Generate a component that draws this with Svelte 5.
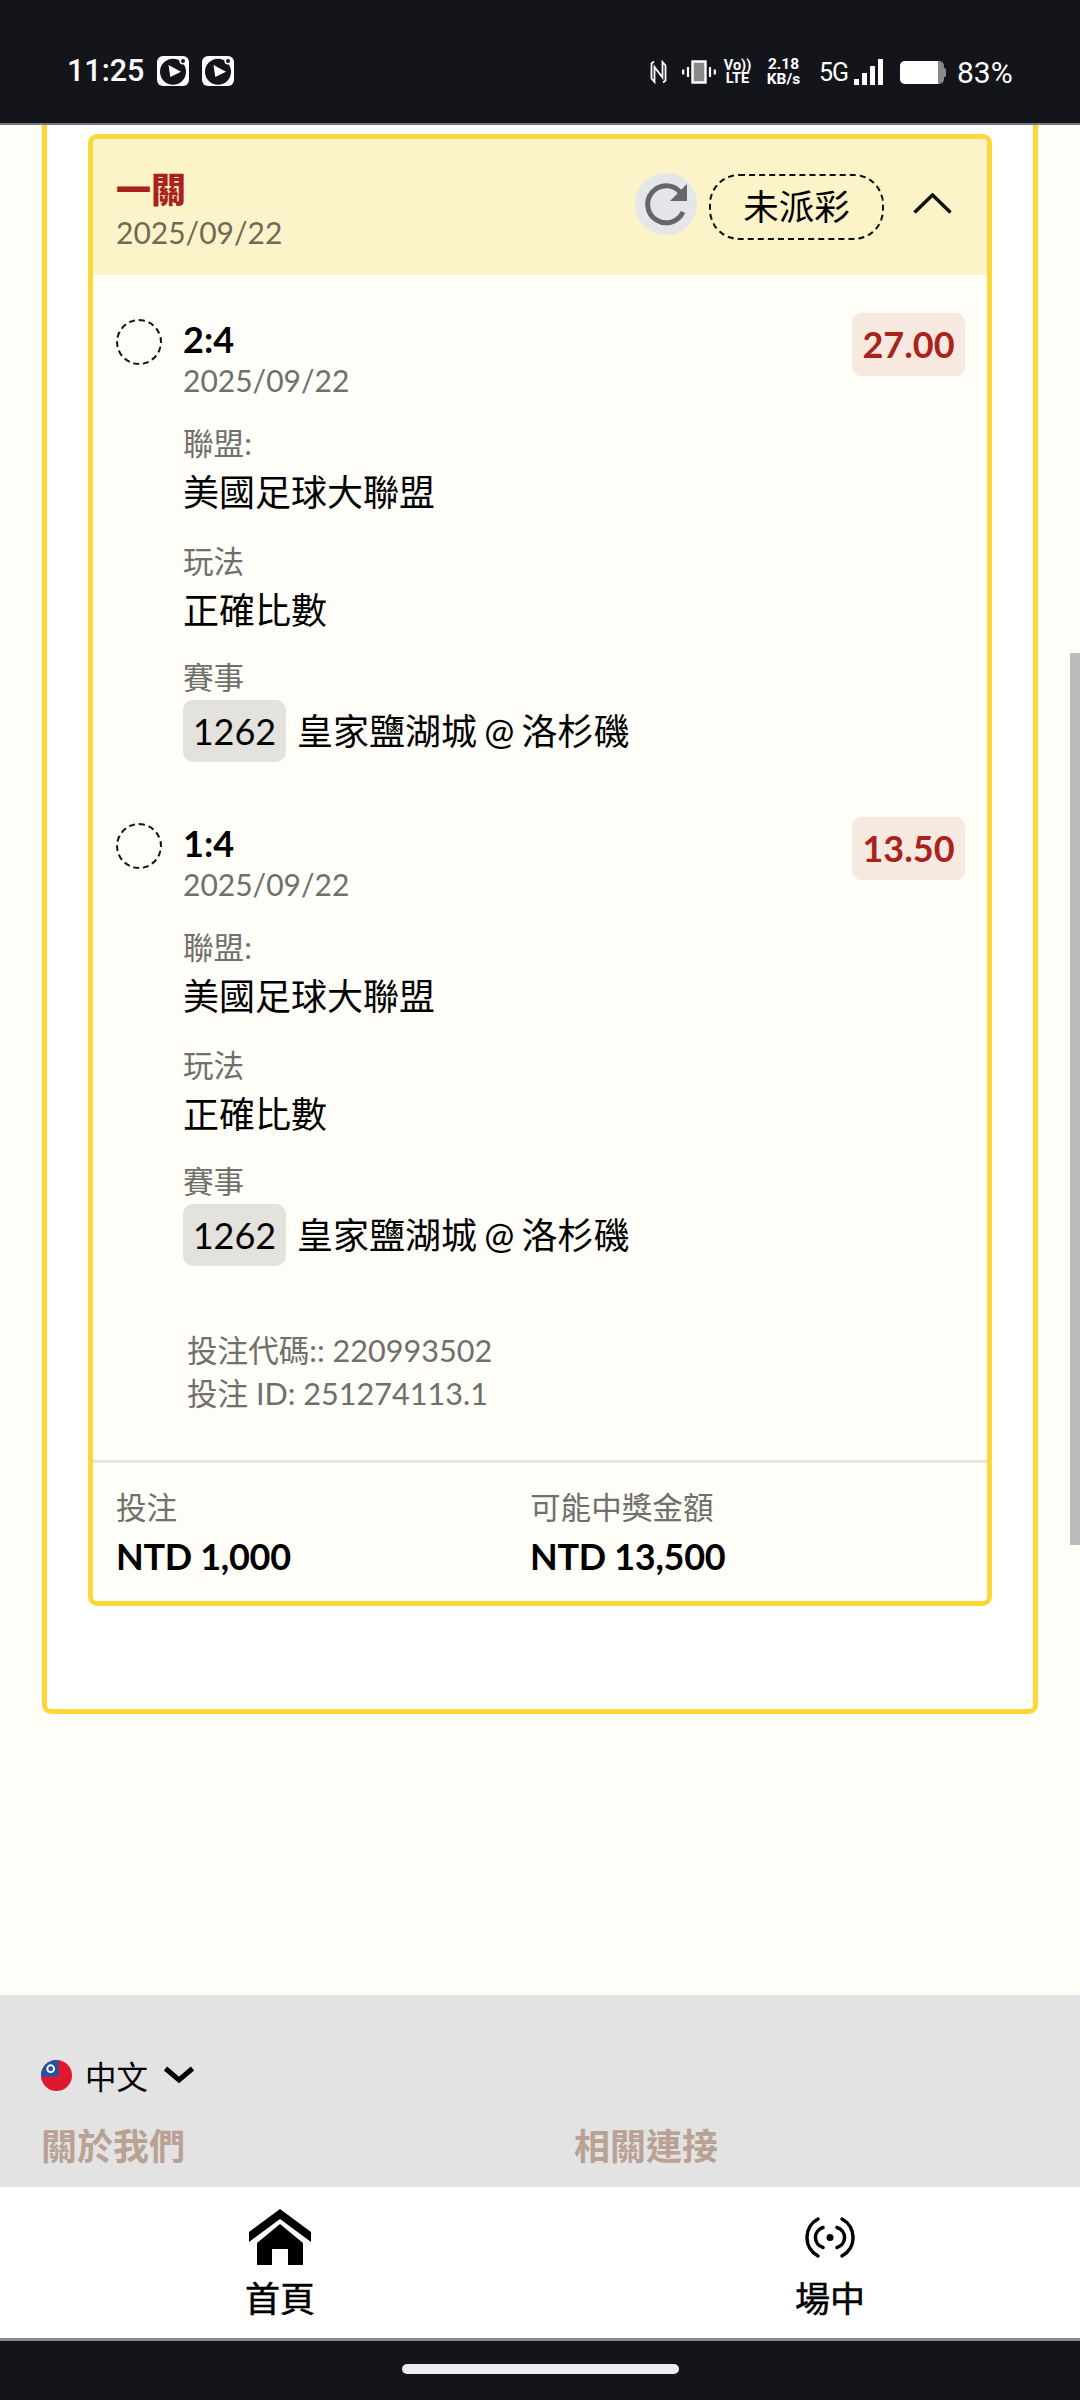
<script>
  const legs = [
    { score: '2:4', odds: '27.00' },
    { score: '1:4', odds: '13.50' }
  ];
</script>

<div class="screen">
  <header class="status">
    <div class="status-left">
      <span class="time">11:25</span>
      {#each [0, 1] as i (i)}
        <svg class="app-icon" viewBox="0 0 32 30" aria-hidden="true">
          <rect width="32" height="30" rx="6" fill="#fff" />
          <circle cx="16" cy="15.7" r="13" fill="#14151a" />
          <circle cx="26" cy="5" r="3.6" fill="#fff" />
          <circle cx="26" cy="5" r="2" fill="#14151a" />
          <path d="M11.5 9 24 15.7 13.3 21z" fill="#fff" />
        </svg>
      {/each}
    </div>
    <div class="status-right">
      <svg class="ic nfc" viewBox="0 0 17 24" aria-hidden="true">
        <path d="M4 1.5 1.5 3.5v15l3 3.5V7l8 10.5V2l3 3.5v15L13 22.5" fill="none" stroke="#fff" stroke-width="1.8" />
      </svg>
      <svg class="ic vib" viewBox="0 0 34 24" aria-hidden="true">
        <rect x="10.5" y="1.5" width="13" height="21" fill="#8a8a8a" stroke="#fff" stroke-width="2.4" />
        <path d="M6 7v10M1.2 9.5v5M28 7v10M32.8 9.5v5" stroke="#fff" stroke-width="2.2" />
      </svg>
      <span class="volte"><span>Vo))</span><span>LTE</span></span>
      <span class="speed"><span>2.18</span><span>KB/s</span></span>
      <span class="net">5G</span>
      <svg class="ic sig" viewBox="0 0 30 26" aria-hidden="true">
        <rect x="0" y="20" width="5" height="6" fill="#fff" />
        <rect x="8" y="14" width="5" height="12" fill="#fff" />
        <rect x="16" y="7" width="5" height="19" fill="#fff" />
        <rect x="24" y="0" width="5" height="26" fill="#fff" />
      </svg>
      <svg class="ic bat" viewBox="0 0 46 23" aria-hidden="true">
        <rect width="44" height="23" rx="5" fill="#8a8a8a" />
        <path d="M5 0h33v23H5a5 5 0 0 1-5-5V5a5 5 0 0 1 5-5z" fill="#fff" />
        <rect x="43" y="7" width="3" height="9" rx="1.5" fill="#8a8a8a" />
      </svg>
      <span class="pct">83%</span>
    </div>
  </header>

  <main class="content">
    <section class="outer">
      <article class="ticket">
        <div class="ticket-head">
          <div class="head-titles">
            <div class="head-title">一關</div>
            <div class="head-date">2025/09/22</div>
          </div>
          <div class="head-actions">
            <span class="refresh">
              <svg viewBox="0 0 62 62" aria-hidden="true">
                <path d="M45 19A18.500 18.500 0 1 0 48 39" fill="none" stroke="#666" stroke-width="5" />
                <path d="M52 11v17H35z" fill="#666" />
              </svg>
            </span>
            <span class="pending">未派彩</span>
            <svg class="caret" viewBox="0 0 39 21" aria-hidden="true">
              <path d="M1.500 19.500 19.500 2l18 17.500" fill="none" stroke="#111" stroke-width="3.500" />
            </svg>
          </div>
        </div>

        <div class="legs">
          {#each legs as leg (leg.score)}
            <div class="leg">
              <span class="radio"></span>
              <div class="leg-body">
                <div class="score">{leg.score}</div>
                <div class="muted date">2025/09/22</div>
                <div class="field first">
                  <div class="muted">聯盟:</div>
                  <div class="value">美國足球大聯盟</div>
                </div>
                <div class="field">
                  <div class="muted">玩法</div>
                  <div class="value">正確比數</div>
                </div>
                <div class="field last">
                  <div class="muted">賽事</div>
                  <div class="match">
                    <span class="code">1262</span>
                    <span class="value name">皇家鹽湖城 @ 洛杉磯</span>
                  </div>
                </div>
              </div>
              <span class="odds">{leg.odds}</span>
            </div>
          {/each}
        </div>

        <div class="ids">
          <div>投注代碼:: 220993502</div>
          <div>投注 ID: 251274113.1</div>
        </div>

        <div class="totals">
          <div class="total">
            <div class="muted">投注</div>
            <div class="amount">NTD 1,000</div>
          </div>
          <div class="total">
            <div class="muted">可能中獎金額</div>
            <div class="amount">NTD 13,500</div>
          </div>
        </div>
      </article>
    </section>
    <div class="scrollbar"></div>
  </main>

  <footer class="site-foot">
    <div class="lang">
      <svg class="flag" viewBox="0 0 32 32" aria-hidden="true">
        <defs><clipPath id="flagclip"><circle cx="16" cy="16" r="16" /></clipPath></defs>
        <g clip-path="url(#flagclip)">
          <rect width="32" height="32" fill="#e0182d" />
          <rect width="18" height="17" fill="#2152a6" />
          <circle cx="10" cy="9" r="4.500" fill="#fff" />
          <circle cx="10" cy="9" r="2.500" fill="#2152a6" />
        </g>
      </svg>
      <span class="lang-name">中文</span>
      <svg class="lang-caret" viewBox="0 0 32 18" aria-hidden="true">
        <path d="M2.500 2.500 16 14 29.500 2.500" fill="none" stroke="#000" stroke-width="5" />
      </svg>
    </div>
    <div class="foot-cols">
      <div class="foot-head">關於我們</div>
      <div class="foot-head">相關連接</div>
    </div>
  </footer>

  <nav class="tabs">
    <div class="tab">
      <svg class="tab-ic" viewBox="0 0 62 56" aria-hidden="true">
        <path d="M31 0 62 23v10L31 10 0 33V23z" fill="#000" />
        <path d="M31 15 54 34v22H39V40H23v16H8V34z" fill="#000" />
      </svg>
      <span>首頁</span>
    </div>
    <div class="tab">
      <svg class="tab-ic" viewBox="0 0 62 56" aria-hidden="true">
        <circle cx="31" cy="28.500" r="3.500" fill="#000" />
        <path d="M24 18.500a10.400 10.400 0 0 0 0 20M38 18.500a10.400 10.400 0 0 1 0 20M19 10a21 21 0 0 0 0 37M43 10a21 21 0 0 1 0 37" fill="none" stroke="#000" stroke-width="3.500" stroke-linecap="round" />
      </svg>
      <span>場中</span>
    </div>
  </nav>

  <div class="gesture"><span class="pill"></span></div>
</div>

<style>
  :global(body) {
    margin: 0;
    background: #fffdf7;
  }
  .screen {
    width: 1080px;
    height: 2400px;
    display: flex;
    flex-direction: column;
    overflow: hidden;
    font-family: Lato, "Noto Sans CJK TC", sans-serif;
    color: #000;
    background: #fffdf7;
  }
  .status {
    height: 125px;
    flex: none;
    box-sizing: border-box;
    background: #14151a;
    border-bottom: 2px solid #77787b;
    display: flex;
    justify-content: space-between;
    align-items: center;
    padding: 18px 67px 0 67px;
    color: #fff;
    font-family: Roboto, sans-serif;
  }
  .status-left {
    display: flex;
    align-items: center;
  }
  .time {
    font-size: 30.5px;
    font-weight: 500;
    width: 90px;
  }
  .app-icon {
    width: 32px;
    height: 30px;
    margin-right: 13px;
  }
  .status-right {
    display: flex;
    align-items: center;
    margin-top: 3px;
  }
  .ic {
    display: block;
    flex: none;
  }
  .nfc { width: 17px; height: 24px; margin-right: 15px; }
  .vib { width: 34px; height: 24px; margin-right: 9px; }
  .volte, .speed {
    display: flex;
    flex-direction: column;
    align-items: center;
    font-weight: 700;
    flex: none;
  }
  .volte { width: 25px; font-size: 14.500px; line-height: 13px; margin-right: 15px; }
  .speed { width: 37px; font-size: 15.500px; line-height: 15px; margin-right: 17px; }
  .net {
    width: 26px;
    font-size: 25px;
    font-weight: 400;
    margin-right: 9px;
    letter-spacing: -1px;
    flex: none;
  }
  .sig { width: 30px; height: 26px; margin-right: 16px; }
  .bat { width: 46px; height: 23px; margin-right: 11px; }
  .pct { width: 56px; font-size: 30px; font-weight: 400; flex: none; }

  .content {
    flex: none;
    height: 1870px;
    position: relative;
    padding: 0 42px;
    box-sizing: border-box;
  }
  .outer {
    height: 1589px;
    box-sizing: border-box;
    background: #fff;
    border: 5px solid #fbd838;
    border-top: 0;
    border-radius: 0 0 9px 9px;
    padding: 9px 41px 0;
  }
  .ticket {
    height: 1472px;
    box-sizing: border-box;
    background: #fffdf7;
    border: 5px solid #fbd838;
    border-radius: 9px;
    display: flex;
    flex-direction: column;
  }
  .ticket-head {
    height: 136px;
    flex: none;
    box-sizing: border-box;
    background: #fdf3c8;
    padding: 27px 35px 0 23px;
    display: flex;
    justify-content: space-between;
    border-radius: 4px 4px 0 0;
  }
  .head-title {
    color: #a9231c;
    font-size: 35px;
    font-weight: 900;
    line-height: 46px;
  }
  .head-date {
    color: #6f6a58;
    font-size: 30px;
    line-height: 40px;
  }
  .head-actions {
    display: flex;
    align-items: flex-start;
    margin-top: 8px;
  }
  .refresh {
    width: 62px;
    height: 62px;
    border-radius: 50%;
    background: #e4e6ea;
    display: block;
    margin-top: -1px;
    margin-right: 12px;
  }
  .refresh svg { display: block; width: 62px; height: 62px; }
  .pending {
    width: 175px;
    height: 66px;
    box-sizing: border-box;
    border: 2.500px dashed #111;
    border-radius: 30px;
    font-size: 35.500px;
    line-height: 61px;
    text-align: center;
  }
  .caret {
    width: 39px;
    height: 21px;
    margin: 19px 0 0 29px;
  }
  .legs {
    padding: 44px 22px 0 23px;
    flex: none;
  }
  .leg {
    display: flex;
    align-items: flex-start;
    height: 504px;
  }
  .radio {
    width: 46px;
    height: 46px;
    flex: none;
    box-sizing: border-box;
    border: 2.500px dashed #111;
    border-radius: 50%;
    margin-right: 21px;
  }
  .leg-body {
    flex: 1;
    min-width: 0;
  }
  .score {
    font-size: 36px;
    font-weight: 700;
    line-height: 40px;
  }
  .muted {
    color: #6f6f6b;
    font-size: 30.600px;
    line-height: 38px;
  }
  .muted.date {
    font-size: 30px;
    margin-top: 2px;
  }
  .field {
    margin-top: 28px;
  }
  .field.first {
    margin-top: 26px;
  }
  .value {
    font-size: 36px;
    line-height: 46px;
    margin-top: 6px;
  }
  .name {
    margin-top: 0;
    word-spacing: -2px;
  }
  .field.last .muted {
    line-height: 34px;
  }
  .match {
    display: flex;
    align-items: center;
    gap: 11px;
    margin-top: 5px;
  }
  .code {
    width: 103px;
    height: 62px;
    flex: none;
    background: #e4e2dd;
    border-radius: 10px;
    font-size: 36px;
    line-height: 62px;
    text-align: center;
  }
  .odds {
    width: 113px;
    height: 63px;
    flex: none;
    background: #f8e9e0;
    border-radius: 9px;
    color: #a9231c;
    font-size: 36px;
    font-weight: 700;
    line-height: 63px;
    text-align: center;
    margin-top: -6px;
  }
  .ids {
    margin: 0 0 0 94px;
    padding-top: 2px;
    color: #6f6f6b;
    font-size: 30.600px;
    line-height: 43px;
    flex: none;
  }
  .totals {
    margin-top: auto;
    height: 141px;
    box-sizing: border-box;
    border-top: 3px solid #e6e5e0;
    padding: 26px 23px 0;
    display: grid;
    grid-template-columns: 414px 1fr;
    flex: none;
  }
  .amount {
    font-size: 36px;
    font-weight: 700;
    line-height: 46px;
    margin-top: 6px;
    letter-spacing: -0.3px;
  }
  .scrollbar {
    position: absolute;
    right: 0;
    top: 528px;
    width: 10px;
    height: 892px;
    background: #bcbabb;
  }
  .site-foot {
    height: 192px;
    flex: none;
    box-sizing: border-box;
    background: #e3e3e3;
    padding: 58px 41px 0;
    overflow: hidden;
  }
  .lang {
    display: flex;
    align-items: center;
    height: 44px;
  }
  .flag { width: 31px; height: 31px; }
  .lang-name {
    font-size: 31.500px;
    margin-left: 13px;
  }
  .lang-caret {
    width: 32px;
    height: 18px;
    margin-left: 15px;
  }
  .foot-cols {
    display: grid;
    grid-template-columns: 533px 1fr;
    margin-top: 26px;
  }
  .foot-head {
    color: #b9a193;
    font-size: 36px;
    font-weight: 700;
    line-height: 46px;
  }
  .tabs {
    height: 154px;
    flex: none;
    box-sizing: border-box;
    background: #fff;
    border-bottom: 3px solid #8c8c8c;
    display: flex;
    justify-content: space-between;
  }
  .tab {
    display: flex;
    flex-direction: column;
    align-items: center;
    padding-top: 22px;
    font-size: 35px;
    line-height: 46px;
    box-sizing: border-box;
    -webkit-text-stroke: 0.5px #000;
  }
  .tab:first-child { width: 560px; }
  .tab:last-child { width: 500px; }
  .tab-ic {
    width: 62px;
    height: 56px;
    margin-bottom: 10px;
  }
  .gesture {
    flex: 1;
    background: #14151a;
    display: flex;
    justify-content: center;
    padding-top: 23px;
    box-sizing: border-box;
  }
  .pill {
    width: 277px;
    height: 10px;
    border-radius: 5px;
    background: #eceef0;
  }
</style>
